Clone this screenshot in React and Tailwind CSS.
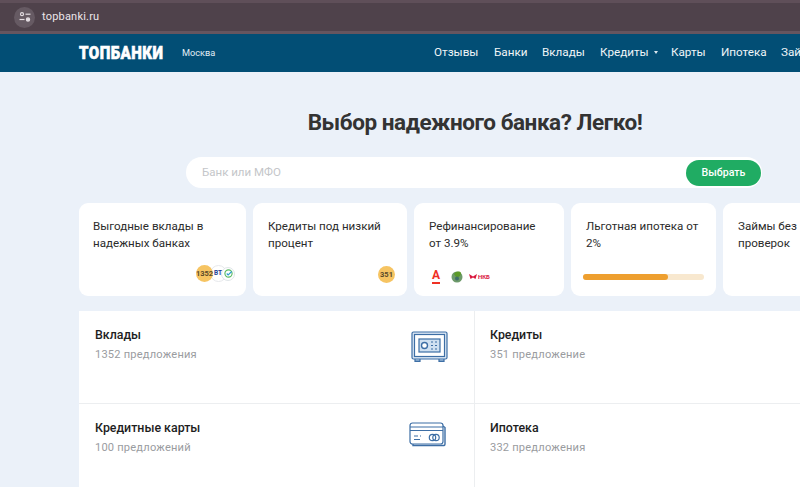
const NAV = [
  { label: 'Отзывы', w: 'w-[44px]' },
  { label: 'Банки', w: 'w-[32px]' },
  { label: 'Вклады', w: 'w-[42px]' },
  { label: 'Кредиты', w: 'w-[55px]', caret: true },
  { label: 'Карты', w: 'w-[34px]' },
  { label: 'Ипотека', w: 'w-[44px]' },
  { label: 'Займы', w: 'w-[42px]' },
];

const OFFERS = [
  { title: 'Вклады', sub: '1352 предложения', icon: 'safe' },
  { title: 'Кредиты', sub: '351 предложение' },
  { title: 'Кредитные карты', sub: '100 предложений', icon: 'card' },
  { title: 'Ипотека', sub: '332 предложения' },
];

function SiteInfoIcon() {
  return (
    <svg width="12" height="10" viewBox="0 0 12 10" fill="none" stroke="#e4dde2" strokeWidth="1.2">
      <circle cx="3" cy="2.2" r="1.5" />
      <path d="M6.5 2.2h5" />
      <path d="M0.5 7.5h5" />
      <circle cx="9" cy="7.5" r="1.6" fill="#e4dde2" />
    </svg>
  );
}

function SafeIcon() {
  return (
    <svg width="38" height="32" viewBox="0 0 38 32" fill="none" stroke="#3d6ea5" strokeWidth="1.2">
      <rect x="1" y="1" width="35" height="27" rx="1.5" fill="#dbe7f4" />
      <rect x="3.5" y="3.5" width="30" height="22" fill="#fff" />
      <rect x="8" y="8" width="21" height="13" fill="#cfe0f1" />
      <circle cx="13.5" cy="14.5" r="3" fill="#fff" strokeWidth="1.4" />
      <path d="M20 11h2M24 11h2M20 14.5h2M24 14.5h2M20 18h2M24 18h2" />
      <path d="M4 28v2.5h5V28M28 28v2.5h5V28" fill="#7fa3c9" />
    </svg>
  );
}

function CardIcon() {
  return (
    <svg width="37" height="25" viewBox="0 0 37 25" fill="none" stroke="#3d6ea5" strokeWidth="1.2">
      <path d="M4 21v2.5h31a1.5 1.5 0 0 0 1-1.5V5.5L34 4" strokeWidth="1.4" />
      <rect x="1" y="1" width="33" height="21" rx="2.5" fill="#fff" />
      <path d="M1 5h33M1 8.5h33" />
      <path d="M5 14h4M11 14h1M5 17.5h6" />
      <circle cx="23.5" cy="15.5" r="3.2" />
      <circle cx="27" cy="15.5" r="3.2" />
    </svg>
  );
}

function AlfaIcon() {
  return (
    <div className="flex flex-col items-center w-[10px] text-[#ef3124]">
      <span className="text-[12px] leading-[11px] font-bold">А</span>
      <span className="w-[8px] h-[2px] mt-[1px] bg-[#ef3124]" />
    </div>
  );
}

function PromoCard({ className, lines, children }) {
  return (
    <div className={`relative shrink-0 h-[93px] rounded-[9px] bg-white pt-[15px] text-[11.6px] leading-[17px] text-[#2b2b2b] ${className}`}>
      {lines.map((l) => (
        <div key={l} className="whitespace-nowrap">{l}</div>
      ))}
      {children}
    </div>
  );
}

export default function App() {
  return (
    <div className="w-[800px] h-[487px] overflow-hidden bg-[#ebf1f9] font-['Roboto',sans-serif]">
      <div className="h-[34px] bg-[#4f424b] border-y-[3px] border-y-[#5f4f59] border-b-[#65555f] flex items-center pl-[14px]">
        <div className="w-[21px] h-[21px] rounded-full bg-[#665a63] flex items-center justify-center">
          <SiteInfoIcon />
        </div>
        <span className="ml-[7px] text-[11px] tracking-[0.2px] text-[#ece6ea]">topbanki.ru</span>
      </div>

      <header className="h-[38px] bg-[#024e75] flex items-center pl-[79px] whitespace-nowrap overflow-hidden">
        <span className="shrink-0 w-[84px] origin-left scale-x-[0.86] text-[17.5px] font-black text-white tracking-[0.55px] [-webkit-text-stroke:0.6px_white]">ТОПБАНКИ</span>
        <span className="shrink-0 ml-[19px] w-[33px] text-[9.2px] text-[#e3eef5]">Москва</span>
        <nav className="ml-[219px] flex gap-[16px] text-[11.7px] text-[#f0f5f8]">
          {NAV.map((n) => (
            <span key={n.label} className={`shrink-0 flex items-center ${n.w}`}>
              {n.label}
              {n.caret && <span className="ml-[5px] border-x-[2.5px] border-x-transparent border-t-[3px] border-t-[#dce8ef]" />}
            </span>
          ))}
        </nav>
      </header>

      <main className="pl-[79px]">
        <h1 className="w-[792px] mt-[33px] text-center text-[22.5px] leading-[34px] font-bold tracking-[-0.45px] text-[#333333]">
          Выбор надежного банка? Легко!
        </h1>

        <div className="ml-[107px] mt-[18px] w-[576px] h-[31px] rounded-full bg-white flex items-center justify-between pl-[16px] pr-[1px]">
          <span className="text-[11.5px] text-[#c4c6c9]">Банк или МФО</span>
          <button className="w-[75px] h-[26px] rounded-full bg-[#20ac63] text-[10.6px] font-medium text-white">Выбрать</button>
        </div>

        <div className="mt-[15px] flex gap-[7px]">
          <PromoCard className="w-[167px] pl-[14px]" lines={['Выгодные вклады в', 'надежных банках']}>
            <div className="absolute left-[117px] top-[62px] flex items-center">
              <div className="z-10 w-[17px] h-[17px] rounded-full bg-[#f6c462] flex items-center justify-center text-[7.5px] font-bold text-[#5a4a2a]">1352</div>
              <div className="z-0 -ml-[3px] w-[17px] h-[17px] rounded-full bg-white border border-[#e6e8eb] flex items-center pl-[3px] text-[6.5px] font-bold text-[#1f3f93]">ВТ</div>
              <div className="z-0 -ml-[6px] w-[14px] h-[14px] rounded-full bg-white border border-[#dfe5e8] flex items-center justify-center">
                <svg width="9" height="9" viewBox="0 0 10 10" fill="none" strokeWidth="1.3">
                  <circle cx="5" cy="5" r="4" stroke="#5dbb63" />
                  <path d="M3 5l1.6 1.6L8.5 2.8" stroke="#2f9fd0" />
                </svg>
              </div>
            </div>
          </PromoCard>

          <PromoCard className="w-[154px] pl-[15px]" lines={['Кредиты под низкий', 'процент']}>
            <div className="absolute left-[125px] top-[63px] w-[17px] h-[17px] rounded-full bg-[#f6c462] flex items-center justify-center text-[7.5px] font-bold text-[#5a4a2a]">351</div>
          </PromoCard>

          <PromoCard className="w-[150px] pl-[15px]" lines={['Рефинансирование', 'от 3.9%']}>
            <div className="absolute left-[17px] top-[65px] flex items-center">
              <AlfaIcon />
              <svg className="ml-[10px]" width="12" height="13" viewBox="0 0 12 13">
                <circle cx="6" cy="7" r="5.5" fill="#6d9a6a" />
                <path d="M3 4c2-3 6-3 7-1 0 3-3 5-5 4z" fill="#5c9a28" />
                <circle cx="6" cy="8.5" r="2" fill="#3f6f6a" />
              </svg>
              <svg className="ml-[6px]" width="8" height="6" viewBox="0 0 8 6">
                <path d="M0 0l4 2.5L8 0 6.5 5 4 3.5 1.5 5z" fill="#d9173f" />
              </svg>
              <span className="ml-[1px] text-[6px] font-bold text-[#d9173f]">НКБ</span>
            </div>
          </PromoCard>

          <PromoCard className="w-[145px] pl-[15px]" lines={['Льготная ипотека от', '2%']}>
            <div className="absolute left-[12px] top-[71px] w-[121px] h-[6px] rounded-full bg-[#f8e8cf]">
              <div className="w-[85px] h-full rounded-full bg-[#ee9f2f]" />
            </div>
          </PromoCard>

          <PromoCard className="w-[120px] pl-[15px]" lines={['Займы без', 'проверок']} />
        </div>

        <div className="mt-[15px] w-[800px] grid grid-cols-[396px_404px] grid-rows-[93px_92px] bg-white">
          {OFFERS.map((o, i) => (
            <div
              key={o.title}
              className={`relative pt-[15px] ${i % 2 === 0 ? 'pl-[16px] border-r border-r-[#eceef0]' : 'pl-[15px]'} ${i < 2 ? 'border-b border-b-[#eceef0]' : ''}`}
            >
              <div className="text-[12.4px] leading-[18px] font-medium text-[#1e1e1e]">{o.title}</div>
              <div className="mt-[2px] text-[11.1px] leading-[17px] tracking-[0.2px] text-[#9a9c9f]">{o.sub}</div>
              {o.icon === 'safe' && (
                <div className="absolute left-[332px] top-[20px]"><SafeIcon /></div>
              )}
              {o.icon === 'card' && (
                <div className="absolute left-[330px] top-[18px]"><CardIcon /></div>
              )}
            </div>
          ))}
        </div>
      </main>
    </div>
  );
}
